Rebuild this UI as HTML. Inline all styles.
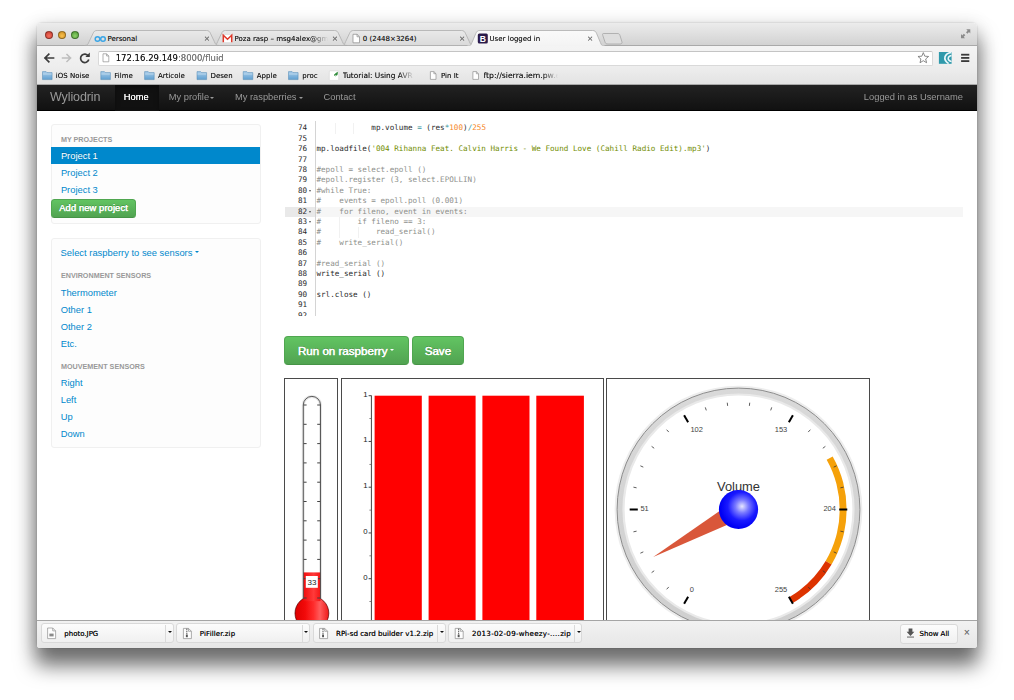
<!DOCTYPE html>
<html><head><meta charset="utf-8"><title>User logged in</title><style>
*{box-sizing:border-box;margin:0;padding:0}
html,body{width:1014px;height:700px;overflow:hidden;background:#fff}
body{position:relative;font-family:"Liberation Sans",sans-serif;}
.win *{position:absolute}
.win span{position:static}
.win{filter:blur(.4px);position:absolute;left:37px;top:23px;width:940px;height:625px;border-radius:4px 4px 3px 3px;background:#fff;overflow:hidden}
.shadow{position:absolute;left:37px;top:23px;width:940px;height:625px;border-radius:5px;box-shadow:0 16px 20px 2px rgba(0,0,0,.55),0 2px 18px 2px rgba(0,0,0,.1),0 0 1.5px rgba(0,0,0,.3)}
.ui{font-family:"DejaVu Sans","Liberation Sans",sans-serif;color:#1a1a1a;white-space:nowrap;text-shadow:0 0 .35px rgba(0,0,0,.55)}
.t{white-space:nowrap}
.tabbar{left:0;top:0;width:940px;height:23px;background:linear-gradient(#ececec,#d2d2d2);border-bottom:1px solid #a9a9a9}
.toolbar{left:0;top:23px;width:940px;height:21.5px;background:linear-gradient(#f4f4f4,#ededed)}
.bmbar{left:0;top:44.5px;width:940px;height:17.5px;background:linear-gradient(#ededed,#e3e3e3);border-bottom:1px solid #a8a8a8}
.navbar{left:0;top:62px;width:940px;height:26px;background:linear-gradient(#222,#111);border-bottom:1px solid #000}
.nav{color:#999;font-size:9.3px}
.link{color:#08c;font-size:9.35px;left:23.7px;line-height:12px;white-space:nowrap}
.hdr{color:#999;font-size:7.2px;font-weight:bold;left:23.9px;line-height:10px;white-space:nowrap}
.well{background:#fdfdfd;border:1px solid #f0f0f0;border-radius:3px}
.ln{font-family:"DejaVu Sans Mono","Liberation Mono",monospace;font-size:7.62px;color:#2a2a2a;white-space:pre;line-height:10.4px;height:10.4px}
.c{color:#8e908c}.s{color:#718c00}.n{color:#f5871f}.o{color:#3e999f}
.btn{background:linear-gradient(#62c462,#51a351);border:1px solid #50a650;border-bottom-color:#469446;border-radius:3.5px;color:#fff;text-align:center;white-space:nowrap;text-shadow:0 0 .5px #fff,0 -0.6px 0 rgba(0,0,0,.25)}
.box{border:1px solid #4a4a4a;background:#fff}
.dl{top:601px;height:20px;border:1px solid #d9d9d9;border-radius:3px;background:linear-gradient(#fcfcfc,#f0f0f0)}
</style></head><body>
<div class="shadow"></div>
<div class="win">
<div class="tabbar"></div>
<div style="left:7.8px;top:8.2px;width:8.2px;height:8.2px;border-radius:50%;background:radial-gradient(circle at 50% 65%,#f6705f,#c63a2e);border:0.5px solid rgba(0,0,0,.35)"></div>
<div style="left:20.8px;top:8.2px;width:8.2px;height:8.2px;border-radius:50%;background:radial-gradient(circle at 50% 65%,#f9c04d,#cf8f1f);border:0.5px solid rgba(0,0,0,.35)"></div>
<div style="left:34.1px;top:8.2px;width:8.2px;height:8.2px;border-radius:50%;background:radial-gradient(circle at 50% 65%,#8fd16a,#4c9a33);border:0.5px solid rgba(0,0,0,.35)"></div>
<svg style="left:0;top:0" width="940" height="60" viewBox="37 23 940 60"><defs><linearGradient id="ti" x1="0" y1="0" x2="0" y2="1"><stop offset="0" stop-color="#e9e9e9"/><stop offset="1" stop-color="#dadada"/></linearGradient><linearGradient id="ta" x1="0" y1="0" x2="0" y2="1"><stop offset="0" stop-color="#fafafa"/><stop offset="1" stop-color="#f3f3f3"/></linearGradient></defs><path d="M341.0,45.5 C344.0,45.5 344.7,44.0 345.7,41.5 L349.4,33.7 C350.4,31.3 351.4,30.5 353.6,30.5 L461.4,30.5 C463.6,30.5 464.6,31.3 465.6,33.7 L469.3,41.5 C470.3,44.0 471.0,45.5 474.0,45.5 Z" fill="url(#ti)" stroke="#adadad" stroke-width="0.8"/><path d="M213.0,45.5 C216.0,45.5 216.7,44.0 217.7,41.5 L221.4,33.7 C222.4,31.3 223.4,30.5 225.6,30.5 L334.4,30.5 C336.6,30.5 337.6,31.3 338.6,33.7 L342.3,41.5 C343.3,44.0 344.0,45.5 347.0,45.5 Z" fill="url(#ti)" stroke="#adadad" stroke-width="0.8"/><path d="M84.5,45.5 C87.5,45.5 88.2,44.0 89.2,41.5 L92.9,33.7 C93.9,31.3 94.9,30.5 97.1,30.5 L206.4,30.5 C208.6,30.5 209.6,31.3 210.6,33.7 L214.3,41.5 C215.3,44.0 216.0,45.5 219.0,45.5 Z" fill="url(#ti)" stroke="#adadad" stroke-width="0.8"/><path d="M603.5,33.5 L617,33.5 C619,33.5 619.5,34 620,35.5 L622,42 C622.3,43.3 621.5,44 620,44 L608,44 C606,44 605.5,43.5 605,42 L602.8,35.5 C602.4,34 602.5,33.5 603.5,33.5 Z" fill="#dedede" stroke="#a6a6a6" stroke-width="0.8"/><path d="M467.3,46.5 C470.3,46.5 471.0,45.0 472.0,42.5 L475.7,33.7 C476.7,31.3 477.7,30.5 479.90000000000003,30.5 L592.5,30.5 C594.7,30.5 595.7,31.3 596.7,33.7 L600.4,42.5 C601.4,45.0 602.1,46.5 605.1,46.5 Z" fill="url(#ta)" stroke="#adadad" stroke-width="0.8"/><rect x="467.5" y="45.6" width="137" height="1.4" fill="#f3f3f3"/><g fill="#8a8a8a"><path d="M970.3,29.3 L970.3,33.4 L969,32.1 L967.4,33.7 L966,32.3 L967.6,30.7 L966.3,29.3 Z"/><path d="M961,38.2 L961,34.1 L962.3,35.4 L963.9,33.8 L965.3,35.2 L963.7,36.8 L965,38.2 Z"/></g><g fill="none" stroke="#3aa5e6" stroke-width="1.5"><circle cx="97.5" cy="39" r="2.3"/><circle cx="103" cy="39" r="2.3"/></g><g><rect x="222.8" y="34.8" width="9.4" height="7.6" fill="#fff" stroke="#d9d9d9" stroke-width="0.4"/><path d="M223.3,42.2 L223.3,35.2 L227.5,39.2 L231.7,35.2 L231.7,42.2" fill="none" stroke="#e0392b" stroke-width="1.5"/></g><path d="M353,34.3 L357.03,34.3 L359.5,36.769999999999996 L359.5,42.8 L353,42.8 Z" fill="#fff" stroke="#8a8a8a" stroke-width="0.7"/><path d="M357.03,34.3 L357.03,36.769999999999996 L359.5,36.769999999999996" fill="none" stroke="#8a8a8a" stroke-width="0.7"/><rect x="477.8" y="33.6" width="10" height="10" rx="1.5" fill="#2b1b4a"/><text x="482.8" y="41.6" font-family="Liberation Sans, sans-serif" font-weight="bold" font-size="8.6" fill="#fff" text-anchor="middle">B</text></svg>
<div class="ui" style="left:70.5px;top:10.7px;font-size:7px;line-height:10px;">Personal</div>
<div class="ui" style="left:197.5px;top:10.7px;font-size:7px;line-height:10px;width:93px;overflow:hidden;-webkit-mask-image:linear-gradient(90deg,#000 80%,transparent);mask-image:linear-gradient(90deg,#000 80%,transparent);">Poza rasp – msg4alex@gmail.com</div>
<div class="ui" style="left:325.8px;top:10.7px;font-size:7px;line-height:10px;">0 (2448×3264)</div>
<div class="ui" style="left:452.5px;top:10.7px;font-size:7px;line-height:10px;">User logged in</div>
<div class="ui" style="left:166.8px;top:10.7px;width:6px;text-align:center;font-size:7.5px;line-height:10px;color:#777">×</div>
<div class="ui" style="left:294.8px;top:10.7px;width:6px;text-align:center;font-size:7.5px;line-height:10px;color:#777">×</div>
<div class="ui" style="left:422px;top:10.7px;width:6px;text-align:center;font-size:7.5px;line-height:10px;color:#777">×</div>
<div class="ui" style="left:550px;top:10.7px;width:6px;text-align:center;font-size:7.5px;line-height:10px;color:#777">×</div>
<div class="toolbar"></div>
<svg style="left:0;top:23px" width="940" height="22" viewBox="37 46 940 22"><path d="M53.5,58 L45,58 M48.8,54.2 L45,58 L48.8,61.8" fill="none" stroke="#3c3c3c" stroke-width="1.7" stroke-linecap="square"/><path d="M62.5,58 L70.5,58 M67,54.5 L70.5,58 L67,61.5" fill="none" stroke="#bdbdbd" stroke-width="1.5" stroke-linecap="square"/><path d="M88.3,56 A4.2,4.2 0 1 0 88.8,59.6" fill="none" stroke="#3c3c3c" stroke-width="1.7"/><path d="M89.8,52.6 L89.8,57 L85.4,57 Z" fill="#3c3c3c"/></svg>
<div style="left:60.5px;top:28px;width:835px;height:14.5px;background:#fff;border:1px solid #d9d9d9;border-top-color:#c4c4c4;border-radius:2px"></div>
<svg style="left:0;top:23px" width="940" height="22" viewBox="37 46 940 22"><path d="M103,53.8 L106.596,53.8 L108.8,56.004 L108.8,61.8 L103,61.8 Z" fill="#fff" stroke="#8f8f8f" stroke-width="0.7"/><path d="M106.596,53.8 L106.596,56.004 L108.8,56.004" fill="none" stroke="#8f8f8f" stroke-width="0.7"/><polygon points="923.30,52.60 924.77,56.18 928.63,56.47 925.68,58.97 926.59,62.73 923.30,60.70 920.01,62.73 920.92,58.97 917.97,56.47 921.83,56.18" fill="#fff" stroke="#6d6d6d" stroke-width="0.8" stroke-linejoin="round"/><rect x="938.9" y="52" width="12.7" height="11.8" fill="#2f99ab"/><g fill="none" stroke="#eaf7fa" stroke-linecap="butt"><path d="M951.4,52.3 C944.5,53.3 942.3,59.6 948.6,63.6" stroke-width="1.7"/><path d="M951.5,55.6 C947.4,56.6 946.8,60.2 951.5,61.6" stroke-width="1.5"/></g><rect x="961.1" y="53.800000000000004" width="8.2" height="1.8" fill="#3a3a3a"/><rect x="961.1" y="57.0" width="8.2" height="1.8" fill="#3a3a3a"/><rect x="961.1" y="60.2" width="8.2" height="1.8" fill="#3a3a3a"/></svg>
<div class="ui" style="left:78.7px;top:29px;font-size:8.5px;line-height:12px;color:#111">172.16.29.149<span style="color:#7b7b7b">:8000/fluid</span></div>
<div class="bmbar"></div>
<svg style="left:0;top:44px" width="940" height="18" viewBox="37 67 940 18"><defs><linearGradient id="fg" x1="0" y1="0" x2="0" y2="1"><stop offset="0" stop-color="#a9cdea"/><stop offset="1" stop-color="#5f9fd0"/></linearGradient></defs><path d="M42.5,71.6 L46.1,71.6 L47.1,72.6 L52.1,72.6 L52.1,79.6 L42.5,79.6 Z" fill="url(#fg)" stroke="#4f86b3" stroke-width="0.5"/><rect x="43.0" y="73.6" width="8.6" height="0.8" fill="#d4e6f5" opacity=".8"/><path d="M100.8,71.6 L104.39999999999999,71.6 L105.39999999999999,72.6 L110.39999999999999,72.6 L110.39999999999999,79.6 L100.8,79.6 Z" fill="url(#fg)" stroke="#4f86b3" stroke-width="0.5"/><rect x="101.3" y="73.6" width="8.6" height="0.8" fill="#d4e6f5" opacity=".8"/><path d="M144.6,71.6 L148.2,71.6 L149.2,72.6 L154.2,72.6 L154.2,79.6 L144.6,79.6 Z" fill="url(#fg)" stroke="#4f86b3" stroke-width="0.5"/><rect x="145.1" y="73.6" width="8.6" height="0.8" fill="#d4e6f5" opacity=".8"/><path d="M197,71.6 L200.6,71.6 L201.6,72.6 L206.6,72.6 L206.6,79.6 L197,79.6 Z" fill="url(#fg)" stroke="#4f86b3" stroke-width="0.5"/><rect x="197.5" y="73.6" width="8.6" height="0.8" fill="#d4e6f5" opacity=".8"/><path d="M243.2,71.6 L246.79999999999998,71.6 L247.79999999999998,72.6 L252.79999999999998,72.6 L252.79999999999998,79.6 L243.2,79.6 Z" fill="url(#fg)" stroke="#4f86b3" stroke-width="0.5"/><rect x="243.7" y="73.6" width="8.6" height="0.8" fill="#d4e6f5" opacity=".8"/><path d="M288.5,71.6 L292.1,71.6 L293.1,72.6 L298.1,72.6 L298.1,79.6 L288.5,79.6 Z" fill="url(#fg)" stroke="#4f86b3" stroke-width="0.5"/><rect x="289.0" y="73.6" width="8.6" height="0.8" fill="#d4e6f5" opacity=".8"/><rect x="329.3" y="70.8" width="9.4" height="9.6" rx="1" fill="#fff" stroke="#cfcfcf" stroke-width="0.5"/><path d="M334.5,74.5 L337.5,72.3 L337,75.2 Z M334,75 L335.5,76 " fill="#2e8b3a" stroke="#2e8b3a" stroke-width="0.8"/><path d="M430.4,71.6 L433.872,71.6 L436.0,73.728 L436.0,79.39999999999999 L430.4,79.39999999999999 Z" fill="#fff" stroke="#8f8f8f" stroke-width="0.7"/><path d="M433.872,71.6 L433.872,73.728 L436.0,73.728" fill="none" stroke="#8f8f8f" stroke-width="0.7"/><path d="M472.9,71.6 L476.372,71.6 L478.5,73.728 L478.5,79.39999999999999 L472.9,79.39999999999999 Z" fill="#fff" stroke="#8f8f8f" stroke-width="0.7"/><path d="M476.372,71.6 L476.372,73.728 L478.5,73.728" fill="none" stroke="#8f8f8f" stroke-width="0.7"/></svg>
<div class="ui" style="left:18.8px;top:47.6px;font-size:7px;line-height:10px;">iOS Noise</div>
<div class="ui" style="left:77.3px;top:47.6px;font-size:7px;line-height:10px;">Filme</div>
<div class="ui" style="left:121px;top:47.6px;font-size:7px;line-height:10px;">Articole</div>
<div class="ui" style="left:173.5px;top:47.6px;font-size:7px;line-height:10px;">Desen</div>
<div class="ui" style="left:219.8px;top:47.6px;font-size:7px;line-height:10px;">Apple</div>
<div class="ui" style="left:265.3px;top:47.6px;font-size:7px;line-height:10px;">proc</div>
<div class="ui" style="left:305.8px;top:47.6px;font-size:7.4px;line-height:10px;width:71px;overflow:hidden;-webkit-mask-image:linear-gradient(90deg,#000 78%,transparent);mask-image:linear-gradient(90deg,#000 78%,transparent);">Tutorial: Using AVR Studio</div>
<div class="ui" style="left:404px;top:47.6px;font-size:7px;line-height:10px;">Pin It</div>
<div class="ui" style="left:446.5px;top:47.6px;font-size:7.7px;line-height:10px;width:74px;overflow:hidden;-webkit-mask-image:linear-gradient(90deg,#000 78%,transparent);mask-image:linear-gradient(90deg,#000 78%,transparent);">ftp://sierra.iem.pw.edu</div>
<div class="navbar"></div>
<div style="left:78px;top:62px;width:43.8px;height:26px;background:#111;box-shadow:inset 0 2px 5px rgba(0,0,0,.35)"></div>
<div class="t nav" style="left:13px;top:68.4px;line-height:12px;font-size:12.5px;top:66.2px;line-height:16px;letter-spacing:-0.1px">Wyliodrin</div>
<div class="t nav" style="left:86.8px;top:68.4px;line-height:12px;color:#fff;text-shadow:0 0 .6px #fff">Home</div>
<div class="t nav" style="left:131.8px;top:68.4px;line-height:12px;">My profile</div>
<div class="t nav" style="left:198px;top:68.4px;line-height:12px;">My raspberries</div>
<div class="t nav" style="left:286.5px;top:68.4px;line-height:12px;">Contact</div>
<div class="t nav" style="left:826.8px;top:68.4px;line-height:12px;font-size:9.35px">Logged in as Username</div>
<div style="left:173.4px;top:74px;border-left:2.3px solid transparent;border-right:2.3px solid transparent;border-top:2.6px solid #999;width:0;height:0"></div>
<div style="left:261.9px;top:74px;border-left:2.3px solid transparent;border-right:2.3px solid transparent;border-top:2.6px solid #999;width:0;height:0"></div>
<div class="well" style="left:13.6px;top:101.4px;width:210.2px;height:99.8px"></div>
<div class="hdr" style="left:23.9px;top:111.6px">MY PROJECTS</div>
<div style="left:14.2px;top:124.4px;width:209.3px;height:17.1px;background:#08c"></div>
<div class="link" style="left:23.9px;top:127.2px;color:#fff;text-shadow:0 -0.6px 0 rgba(0,0,0,.2)">Project 1</div>
<div class="link" style="left:23.9px;top:144.2px">Project 2</div>
<div class="link" style="left:23.9px;top:161px">Project 3</div>
<div class="btn" style="left:14.1px;top:176px;width:85px;height:18.9px;font-size:9.3px;line-height:17.2px;letter-spacing:.13px;-webkit-text-stroke:.25px #fff">Add new project</div>
<div class="well" style="left:14px;top:215.2px;width:209.6px;height:210px"></div>
<div class="link" style="left:23.6px;top:224px;font-size:9.4px">Select raspberry to see sensors</div>
<div style="left:158.2px;top:228px;border-left:2.1px solid transparent;border-right:2.1px solid transparent;border-top:2.4px solid #08c;width:0;height:0"></div>
<div class="hdr" style="left:23.9px;top:248px">ENVIRONMENT SENSORS</div>
<div class="link" style="left:23.7px;top:263.5px">Thermometer</div>
<div class="link" style="left:23.7px;top:280.6px">Other 1</div>
<div class="link" style="left:23.7px;top:297.7px">Other 2</div>
<div class="link" style="left:23.7px;top:314.8px">Etc.</div>
<div class="hdr" style="left:23.9px;top:338.8px">MOUVEMENT SENSORS</div>
<div class="link" style="left:23.7px;top:354.2px">Right</div>
<div class="link" style="left:23.7px;top:371.3px">Left</div>
<div class="link" style="left:23.7px;top:388.4px">Up</div>
<div class="link" style="left:23.7px;top:405.2px">Down</div>
<div style="left:248px;top:183.6px;width:31px;height:10.4px;background:#e9e9e9"></div>
<div style="left:279px;top:183.6px;width:647px;height:10.4px;background:#f6f6f6"></div>
<div style="left:278.2px;top:98px;width:1.2px;height:194.8px;background:#d4d4d4"></div>
<div style="left:247px;top:95px;width:680px;height:197.8px;overflow:hidden">
<div class="ln" style="left:0;top:5.40px;width:23.2px;text-align:right">74</div>
<div class="ln" style="left:32.39999999999998px;top:5.40px">            mp.volume <span class="o">=</span> (res<span class="o">*</span><span class="n">100</span>)<span class="o">/</span><span class="n">255</span></div>
<div class="ln" style="left:0;top:15.80px;width:23.2px;text-align:right">75</div>
<div class="ln" style="left:0;top:26.20px;width:23.2px;text-align:right">76</div>
<div class="ln" style="left:32.39999999999998px;top:26.20px">mp.loadfile(<span class="s">'004 Rihanna Feat. Calvin Harris - We Found Love (Cahill Radio Edit).mp3'</span>)</div>
<div class="ln" style="left:0;top:36.60px;width:23.2px;text-align:right">77</div>
<div class="ln" style="left:0;top:47.00px;width:23.2px;text-align:right">78</div>
<div class="ln" style="left:32.39999999999998px;top:47.00px"><span class="c">#epoll = select.epoll ()</span></div>
<div class="ln" style="left:0;top:57.40px;width:23.2px;text-align:right">79</div>
<div class="ln" style="left:32.39999999999998px;top:57.40px"><span class="c">#epoll.register (3, select.EPOLLIN)</span></div>
<div class="ln" style="left:0;top:67.80px;width:23.2px;text-align:right">80</div>
<div style="left:25.3px;top:72.20px;border-left:1.5px solid transparent;border-right:1.5px solid transparent;border-top:2px solid #555;width:0;height:0"></div>
<div class="ln" style="left:32.39999999999998px;top:67.80px"><span class="c">#while True:</span></div>
<div class="ln" style="left:0;top:78.20px;width:23.2px;text-align:right">81</div>
<div class="ln" style="left:32.39999999999998px;top:78.20px"><span class="c">#    events = epoll.poll (0.001)</span></div>
<div class="ln" style="left:0;top:88.60px;width:23.2px;text-align:right">82</div>
<div style="left:25.3px;top:93.00px;border-left:1.5px solid transparent;border-right:1.5px solid transparent;border-top:2px solid #555;width:0;height:0"></div>
<div class="ln" style="left:32.39999999999998px;top:88.60px"><span class="c">#    for fileno, event in events:</span></div>
<div class="ln" style="left:0;top:99.00px;width:23.2px;text-align:right">83</div>
<div style="left:25.3px;top:103.40px;border-left:1.5px solid transparent;border-right:1.5px solid transparent;border-top:2px solid #555;width:0;height:0"></div>
<div class="ln" style="left:32.39999999999998px;top:99.00px"><span class="c">#        if fileno == 3:</span></div>
<div class="ln" style="left:0;top:109.40px;width:23.2px;text-align:right">84</div>
<div class="ln" style="left:32.39999999999998px;top:109.40px"><span class="c">#            read_serial()</span></div>
<div class="ln" style="left:0;top:119.80px;width:23.2px;text-align:right">85</div>
<div class="ln" style="left:32.39999999999998px;top:119.80px"><span class="c">#    write_serial()</span></div>
<div class="ln" style="left:0;top:130.20px;width:23.2px;text-align:right">86</div>
<div class="ln" style="left:0;top:140.60px;width:23.2px;text-align:right">87</div>
<div class="ln" style="left:32.39999999999998px;top:140.60px"><span class="c">#read_serial ()</span></div>
<div class="ln" style="left:0;top:151.00px;width:23.2px;text-align:right">88</div>
<div class="ln" style="left:32.39999999999998px;top:151.00px">write_serial ()</div>
<div class="ln" style="left:0;top:161.40px;width:23.2px;text-align:right">89</div>
<div class="ln" style="left:0;top:171.80px;width:23.2px;text-align:right">90</div>
<div class="ln" style="left:32.39999999999998px;top:171.80px">srl.close ()</div>
<div class="ln" style="left:0;top:182.20px;width:23.2px;text-align:right">91</div>
<div class="ln" style="left:0;top:192.60px;width:23.2px;text-align:right">92</div>
</div>
<div style="left:297.75px;top:100.4px;width:.7px;height:10.4px;background:#f1f1f1"></div>
<div style="left:316.1px;top:100.4px;width:.7px;height:10.4px;background:#f1f1f1"></div>
<div style="left:302.33px;top:194.0px;width:.7px;height:10.4px;background:#f1f1f1"></div>
<div style="left:302.33px;top:204.4px;width:.7px;height:10.4px;background:#f1f1f1"></div>
<div style="left:320.68px;top:204.4px;width:.7px;height:10.4px;background:#f1f1f1"></div>
<div class="btn" style="left:247.3px;top:313.2px;width:124.3px;height:28.7px;font-size:11.6px;line-height:27.4px;-webkit-text-stroke:.3px #fff;border-radius:4px;text-align:left;padding-left:12.6px">Run on raspberry</div>
<div style="left:353.4px;top:325.6px;border-left:2.2px solid transparent;border-right:2.2px solid transparent;border-top:2.5px solid #fff;width:0;height:0"></div>
<div class="btn" style="left:374.6px;top:313.2px;width:52.6px;height:28.7px;font-size:11.6px;line-height:27.4px;-webkit-text-stroke:.3px #fff;border-radius:4px">Save</div>
<div class="box" style="left:247.3px;top:355.1px;width:54.2px;height:250px"></div>
<div class="box" style="left:303.8px;top:355.1px;width:263.2px;height:250px"></div>
<div class="box" style="left:569.3px;top:355.1px;width:263.6px;height:250px"></div>
<svg style="left:247px;top:355px" width="590" height="242" viewBox="284 378 590 242"><defs>
<linearGradient id="tg" x1="0" y1="0" x2="1" y2="0"><stop offset="0" stop-color="#f00c0c"/><stop offset=".6" stop-color="#ff3a3a"/><stop offset="1" stop-color="#f41414"/></linearGradient>
<linearGradient id="bg" x1="0" y1="0" x2="1" y2="0"><stop offset="0" stop-color="#dc0000"/><stop offset=".3" stop-color="#f20a0a"/><stop offset=".55" stop-color="#ff2c2c"/><stop offset=".74" stop-color="#ff5c5c"/><stop offset="1" stop-color="#ee1818"/></linearGradient>
<radialGradient id="ball" cx=".59" cy=".42" r=".56"><stop offset="0" stop-color="#e6e6ff"/><stop offset=".3" stop-color="#7a7aff"/><stop offset=".65" stop-color="#1a1aff"/><stop offset="1" stop-color="#0000f4"/></radialGradient>
<linearGradient id="ring" x1="0" y1="0" x2="0" y2="1"><stop offset="0" stop-color="#d9d9d9"/><stop offset="1" stop-color="#cfcfcf"/></linearGradient>
</defs><path d="M303.3,598.6518042355762 L303.3,405.0 A8.599999999999994,8.599999999999994 0 0 1 320.5,405.0 L320.5,598.6518042355762" fill="#fff" stroke="#bbb" stroke-width="3" opacity=".35"/><circle cx="311.9" cy="613.2" r="16.9" fill="url(#bg)" stroke="#500" stroke-width="0.7"/><rect x="303.3" y="572.4" width="17.19999999999999" height="28.75" fill="url(#tg)"/><path d="M303.3,598.95 L303.3,405.0 A8.599999999999994,8.599999999999994 0 0 1 320.5,405.0 L320.5,598.95" fill="none" stroke="#4a4a4a" stroke-width="0.9"/><rect x="303.6" y="404.50" width="3" height="1" fill="#444"/><rect x="317.2" y="404.50" width="3" height="1" fill="#444"/><rect x="303.6" y="423.80" width="3" height="1" fill="#444"/><rect x="317.2" y="423.80" width="3" height="1" fill="#444"/><rect x="303.6" y="443.10" width="3" height="1" fill="#444"/><rect x="317.2" y="443.10" width="3" height="1" fill="#444"/><rect x="303.6" y="462.40" width="3" height="1" fill="#444"/><rect x="317.2" y="462.40" width="3" height="1" fill="#444"/><rect x="303.6" y="481.70" width="3" height="1" fill="#444"/><rect x="317.2" y="481.70" width="3" height="1" fill="#444"/><rect x="303.6" y="501.00" width="3" height="1" fill="#444"/><rect x="317.2" y="501.00" width="3" height="1" fill="#444"/><rect x="303.6" y="520.30" width="3" height="1" fill="#444"/><rect x="317.2" y="520.30" width="3" height="1" fill="#444"/><rect x="303.6" y="539.60" width="3" height="1" fill="#444"/><rect x="317.2" y="539.60" width="3" height="1" fill="#444"/><rect x="303.6" y="558.90" width="3" height="1" fill="#444"/><rect x="317.2" y="558.90" width="3" height="1" fill="#444"/><rect x="303.6" y="578.20" width="3" height="1" fill="#444"/><rect x="317.2" y="578.20" width="3" height="1" fill="#444"/><rect x="303.6" y="597.50" width="3" height="1" fill="#444"/><rect x="317.2" y="597.50" width="3" height="1" fill="#444"/><rect x="305.8" y="576" width="12" height="11.8" fill="#fff"/><text x="311.9" y="585" font-family="Liberation Sans, sans-serif" font-size="8" fill="#222" text-anchor="middle">33</text><rect x="370.9" y="395.4" width="1" height="236" fill="#444"/><rect x="374.6" y="395.7" width="47.2" height="232.6" fill="#ff0000"/><rect x="428.6" y="395.7" width="47.0" height="232.6" fill="#ff0000"/><rect x="482.4" y="395.7" width="47.1" height="232.6" fill="#ff0000"/><rect x="536.3" y="395.7" width="47.6" height="232.6" fill="#ff0000"/><text x="367.6" y="396.7" font-family="Liberation Sans, sans-serif" font-size="7.8" fill="#222" text-anchor="end">1</text><rect x="368.6" y="395.2" width="2.6" height="1" fill="#444"/><rect x="369.4" y="418.19999999999993" width="1.8" height="0.8" fill="#666"/><text x="367.6" y="442.45" font-family="Liberation Sans, sans-serif" font-size="7.8" fill="#222" text-anchor="end">1</text><rect x="368.6" y="440.95" width="2.6" height="1" fill="#444"/><rect x="369.4" y="463.94999999999993" width="1.8" height="0.8" fill="#666"/><text x="367.6" y="488.2" font-family="Liberation Sans, sans-serif" font-size="7.8" fill="#222" text-anchor="end">1</text><rect x="368.6" y="486.7" width="2.6" height="1" fill="#444"/><rect x="369.4" y="509.69999999999993" width="1.8" height="0.8" fill="#666"/><text x="367.6" y="533.9499999999999" font-family="Liberation Sans, sans-serif" font-size="7.8" fill="#222" text-anchor="end">0</text><rect x="368.6" y="532.4499999999999" width="2.6" height="1" fill="#444"/><rect x="369.4" y="555.4499999999999" width="1.8" height="0.8" fill="#666"/><text x="367.6" y="579.6999999999999" font-family="Liberation Sans, sans-serif" font-size="7.8" fill="#222" text-anchor="end">0</text><rect x="368.6" y="578.1999999999999" width="2.6" height="1" fill="#444"/><rect x="369.4" y="601.1999999999999" width="1.8" height="0.8" fill="#666"/><circle cx="738.5" cy="509.5" r="122.6" fill="none" stroke="#ccc" stroke-width="2.5" opacity=".35"/><circle cx="738.5" cy="509.5" r="121.4" fill="url(#ring)" stroke="#8c8c8c" stroke-width="1"/><circle cx="738.5" cy="509.5" r="115" fill="#fff" stroke="#e9e9e9" stroke-width="2.2"/><path d="M832.67,456.41 A108.1,108.1 0 0 1 831.56,564.51 L825.62,561.00 A101.2,101.2 0 0 0 826.66,459.80 Z" fill="#f5a10a"/><path d="M831.56,564.51 A108.1,108.1 0 0 1 792.55,603.12 L789.10,597.14 A101.2,101.2 0 0 0 825.62,561.00 Z" fill="#dd3300"/><line x1="688.15" y1="596.71" x2="684.10" y2="603.72" stroke="#000" stroke-width="2"/><line x1="668.78" y1="586.94" x2="666.64" y2="589.31" stroke="#333" stroke-width="0.8"/><line x1="654.20" y1="570.75" x2="651.61" y2="572.63" stroke="#333" stroke-width="0.8"/><line x1="643.31" y1="551.88" x2="640.39" y2="553.18" stroke="#333" stroke-width="0.8"/><line x1="636.58" y1="531.16" x2="633.45" y2="531.83" stroke="#333" stroke-width="0.8"/><line x1="637.80" y1="509.50" x2="629.70" y2="509.50" stroke="#000" stroke-width="2"/><line x1="636.58" y1="487.84" x2="633.45" y2="487.17" stroke="#333" stroke-width="0.8"/><line x1="643.31" y1="467.12" x2="640.39" y2="465.82" stroke="#333" stroke-width="0.8"/><line x1="654.20" y1="448.25" x2="651.61" y2="446.37" stroke="#333" stroke-width="0.8"/><line x1="668.78" y1="432.06" x2="666.64" y2="429.69" stroke="#333" stroke-width="0.8"/><line x1="688.15" y1="422.29" x2="684.10" y2="415.28" stroke="#000" stroke-width="2"/><line x1="706.30" y1="410.40" x2="705.31" y2="407.36" stroke="#333" stroke-width="0.8"/><line x1="727.61" y1="405.87" x2="727.27" y2="402.69" stroke="#333" stroke-width="0.8"/><line x1="749.39" y1="405.87" x2="749.73" y2="402.69" stroke="#333" stroke-width="0.8"/><line x1="770.70" y1="410.40" x2="771.69" y2="407.36" stroke="#333" stroke-width="0.8"/><line x1="788.85" y1="422.29" x2="792.90" y2="415.28" stroke="#000" stroke-width="2"/><line x1="808.22" y1="432.06" x2="810.36" y2="429.69" stroke="#333" stroke-width="0.8"/><line x1="822.80" y1="448.25" x2="825.39" y2="446.37" stroke="#333" stroke-width="0.8"/><line x1="833.69" y1="467.12" x2="836.61" y2="465.82" stroke="#333" stroke-width="0.8"/><line x1="840.42" y1="487.84" x2="843.55" y2="487.17" stroke="#333" stroke-width="0.8"/><line x1="839.20" y1="509.50" x2="847.30" y2="509.50" stroke="#000" stroke-width="2"/><line x1="840.42" y1="531.16" x2="843.55" y2="531.83" stroke="#333" stroke-width="0.8"/><line x1="833.69" y1="551.88" x2="836.61" y2="553.18" stroke="#333" stroke-width="0.8"/><line x1="822.80" y1="570.75" x2="825.39" y2="572.63" stroke="#333" stroke-width="0.8"/><line x1="808.22" y1="586.94" x2="810.36" y2="589.31" stroke="#333" stroke-width="0.8"/><line x1="788.85" y1="596.71" x2="792.90" y2="603.72" stroke="#000" stroke-width="2"/><text x="691.80" y="592.00" font-family="Liberation Sans, sans-serif" font-size="7.5" fill="#444" text-anchor="middle">0</text><text x="644.60" y="511.40" font-family="Liberation Sans, sans-serif" font-size="7.5" fill="#444" text-anchor="middle">51</text><text x="696.70" y="432.20" font-family="Liberation Sans, sans-serif" font-size="7.5" fill="#444" text-anchor="middle">102</text><text x="781.00" y="432.20" font-family="Liberation Sans, sans-serif" font-size="7.5" fill="#444" text-anchor="middle">153</text><text x="829.70" y="511.40" font-family="Liberation Sans, sans-serif" font-size="7.5" fill="#444" text-anchor="middle">204</text><text x="781.00" y="592.00" font-family="Liberation Sans, sans-serif" font-size="7.5" fill="#444" text-anchor="middle">255</text><text x="738.5" y="490.6" font-family="Liberation Sans, sans-serif" font-size="12.9" fill="#333" text-anchor="middle">Volume</text><path d="M653.20,557.00 L723.93,508.00 L732.10,522.68 Z" fill="#d9573a"/><circle cx="738.5" cy="509.5" r="19.6" fill="url(#ball)"/></svg>
<div style="left:0;top:596.5px;width:940px;height:29px;background:linear-gradient(#f2f2f2,#e6e6e6);border-top:1px solid #a5a5a5"></div>
<div class="dl" style="left:3.5px;top:600px;width:133.3px"></div>
<div style="left:128.2px;top:601.5px;width:1px;height:17px;background:#dadada"></div>
<div style="left:130.5px;top:608px;border-left:2px solid transparent;border-right:2px solid transparent;border-top:2.5px solid #111;width:0;height:0"></div>
<div class="ui" style="left:27.3px;top:605.8px;font-size:7.0px;line-height:10px;color:#111;letter-spacing:0px;text-shadow:0 0 .4px #333">photo.JPG</div>
<div class="dl" style="left:139.3px;top:600px;width:134.0px"></div>
<div style="left:264.7px;top:601.5px;width:1px;height:17px;background:#dadada"></div>
<div style="left:267px;top:608px;border-left:2px solid transparent;border-right:2px solid transparent;border-top:2.5px solid #111;width:0;height:0"></div>
<div class="ui" style="left:162.8px;top:605.8px;font-size:7.0px;line-height:10px;color:#111;letter-spacing:0.1px;text-shadow:0 0 .4px #333">PiFiller.zip</div>
<div class="dl" style="left:275.8px;top:600px;width:133.0px"></div>
<div style="left:400.2px;top:601.5px;width:1px;height:17px;background:#dadada"></div>
<div style="left:402.5px;top:608px;border-left:2px solid transparent;border-right:2px solid transparent;border-top:2.5px solid #111;width:0;height:0"></div>
<div class="ui" style="left:299px;top:605.8px;font-size:7.1px;line-height:10px;color:#111;letter-spacing:0.02px;text-shadow:0 0 .4px #333">RPi-sd card builder v1.2.zip</div>
<div class="dl" style="left:411.3px;top:600px;width:133.7px"></div>
<div style="left:537.2px;top:601.5px;width:1px;height:17px;background:#dadada"></div>
<div style="left:539.5px;top:608px;border-left:2px solid transparent;border-right:2px solid transparent;border-top:2.5px solid #111;width:0;height:0"></div>
<div class="ui" style="left:435px;top:605.8px;font-size:7.1px;line-height:10px;color:#111;letter-spacing:0.27px;text-shadow:0 0 .4px #333">2013-02-09-wheezy-....zip</div>
<div class="dl" style="left:862.5px;top:600.5px;width:58.6px;height:20px"></div>
<svg style="left:0;top:596px" width="940" height="29" viewBox="37 619 940 29"><path d="M47.6,628 L52.72,628 L55.6,630.88 L55.6,638.6 L47.6,638.6 Z" fill="#fdfdfd" stroke="#909090" stroke-width="0.7"/><path d="M52.72,628 L52.72,630.88 L55.6,630.88" fill="none" stroke="#909090" stroke-width="0.7"/><rect x="49.4" y="633.6" width="4.2" height="2.8" fill="#8a8a8a"/><path d="M183.4,628.4 L188.52,628.4 L191.4,631.28 L191.4,638.6 L183.4,638.6 Z" fill="#fdfdfd" stroke="#8c8c8c" stroke-width="0.7"/><path d="M188.52,628.4 L188.52,631.28 L191.4,631.28" fill="none" stroke="#8c8c8c" stroke-width="0.7"/><path d="M186.8,628.8 L186.8,635" stroke="#444" stroke-width="1.2" stroke-dasharray="1,1"/><rect x="185.9" y="634.6" width="1.9" height="2.6" fill="#555"/><path d="M319.6,628.4 L324.72,628.4 L327.6,631.28 L327.6,638.6 L319.6,638.6 Z" fill="#fdfdfd" stroke="#8c8c8c" stroke-width="0.7"/><path d="M324.72,628.4 L324.72,631.28 L327.6,631.28" fill="none" stroke="#8c8c8c" stroke-width="0.7"/><path d="M323.0,628.8 L323.0,635" stroke="#444" stroke-width="1.2" stroke-dasharray="1,1"/><rect x="322.1" y="634.6" width="1.9" height="2.6" fill="#555"/><path d="M455.2,628.4 L460.32,628.4 L463.2,631.28 L463.2,638.6 L455.2,638.6 Z" fill="#fdfdfd" stroke="#8c8c8c" stroke-width="0.7"/><path d="M460.32,628.4 L460.32,631.28 L463.2,631.28" fill="none" stroke="#8c8c8c" stroke-width="0.7"/><path d="M458.59999999999997,628.8 L458.59999999999997,635" stroke="#444" stroke-width="1.2" stroke-dasharray="1,1"/><rect x="457.7" y="634.6" width="1.9" height="2.6" fill="#555"/><path d="M908.6,628.6 L912.4,628.6 L912.4,631.8 L914.4,631.8 L910.5,636 L906.6,631.8 L908.6,631.8 Z" fill="#555"/><rect x="907" y="636.6" width="7" height="0.9" fill="#555"/></svg>
<div class="ui" style="left:882.5px;top:605.8px;font-size:7px;line-height:10px;color:#111;text-shadow:0 0 .4px #333">Show All</div>
<div class="ui" style="left:926.5px;top:604.5px;font-size:8px;line-height:10px;color:#777">×</div>
</div></body></html>
